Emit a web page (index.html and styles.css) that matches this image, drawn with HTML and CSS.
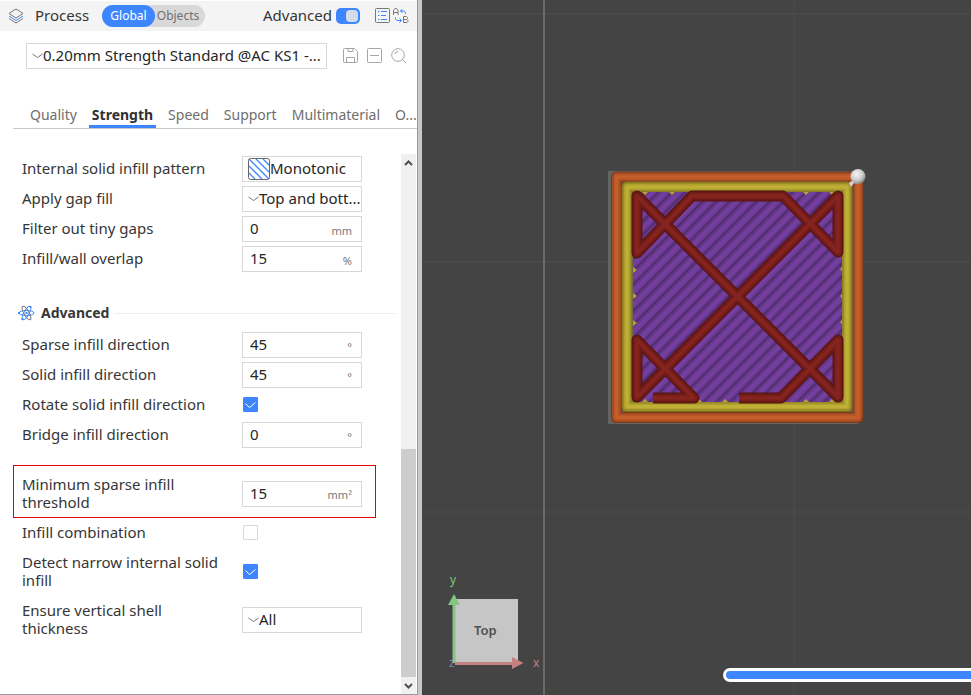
FILE: index.html
```
<!DOCTYPE html>
<html lang="en">
<head>
    <meta charset="UTF-8">
    <meta name="viewport" content="width=device-width, initial-scale=1.0">
    <title>Process settings</title>
    <link rel="stylesheet" href="styles.css">
</head>
<body>
    <aside class="sidebar">
        <header class="process-bar">
            <svg width="16" height="16" viewBox="0 0 16 16" fill="none" stroke="#777">
                <path d="M1 5.500 8 1l7 4.500L8 10z"/>
                <path d="M1 8l7 4.500L15 8" stroke="#3d86ff"/>
                <path d="M1 10.500 8 15l7-4.500"/>
            </svg>
            <h1>Process</h1>
            <div class="scope">
                <button class="active" type="button">Global</button>
                <button type="button">Objects</button>
            </div>
            <label class="mode" for="mode">Advanced</label>
            <input class="switch" type="checkbox" id="mode" checked>
            <button class="icon-btn list-btn" type="button" aria-label="Setting list">
                <svg width="16" height="16" viewBox="0 0 16 16" fill="none" stroke="#777">
                    <rect x=".5" y=".5" width="14" height="14" rx="1"/>
                    <path d="M3 3.500h1.500M3 7.500h1.500M3 11.500h1.500M6 3.500h6M6 7.500h5M6 11.500h6" stroke="#3d86ff"/>
                </svg>
            </button>
            <button class="icon-btn" type="button" aria-label="Compare presets">
                <svg width="16" height="16" viewBox="0 0 16 16" fill="none" stroke="#777">
                    <path d="M.5 7V2.500L2 .5h1.500L5 2.500V7M.5 4.500H5"/>
                    <path d="M10.500 8.500v6h3l1.500-1v-1l-1-1h-3.500M10.500 8.500h3l1 1v1l-1 1"/>
                    <path d="M9.500 1 7.500 3l2 2M7.500 3H11l1.500 1.500V6M6.500 10.500l2 2-2 2M8.500 12.500H4L2.500 11V9.500" stroke="#3d86ff"/>
                </svg>
            </button>
        </header>

        <div class="preset-bar">
            <div class="dropdown">
                <svg width="11" height="6" viewBox="0 0 11 6" fill="none" stroke="#777"><path d="M.5 1l5 3.500 5-3.500"/></svg>
                <select aria-label="Process preset"><option>0.20mm Strength Standard @AC KS1 -...</option></select>
            </div>
            <button class="icon-btn" type="button" aria-label="Save preset">
                <svg width="16" height="16" viewBox="0 0 16 16" fill="none" stroke="#a5a5a5">
                    <path d="M.5 1.500q0-1 1-1h10l3 3v10q0 1-1 1h-12q-1 0-1-1zM5 .5V3.500h5V.5M3.500 14.500v-5h8v5"/>
                </svg>
            </button>
            <button class="icon-btn" type="button" aria-label="Delete preset">
                <svg width="16" height="16" viewBox="0 0 16 16" fill="none" stroke="#a5a5a5">
                    <rect x=".5" y=".5" width="14" height="14" rx="1"/>
                    <path d="M3 7.500h9"/>
                </svg>
            </button>
            <button class="icon-btn" type="button" aria-label="Search">
                <svg width="16" height="16" viewBox="0 0 16 16" fill="none" stroke="#a5a5a5">
                    <circle cx="7" cy="7" r="6.300"/>
                    <path d="M11.500 11.500 15 15M3.500 6q1-2.500 3.500-2.500"/>
                </svg>
            </button>
        </div>

        <nav class="tabs">
            <a href="#quality">Quality</a>
            <a class="active" href="#strength">Strength</a>
            <a href="#speed">Speed</a>
            <a href="#support">Support</a>
            <a href="#multimaterial">Multimaterial</a>
            <a href="#others">O...</a>
        </nav>

        <div class="panel">
            <form class="settings">
                <div class="row">
                    <label for="pattern">Internal solid infill pattern</label>
                    <div class="dropdown">
                        <svg width="22" height="22" viewBox="0 0 22 22" fill="none">
                            <path d="M1 15l6 6M1 8l13 13M1 1l20 20M8 1l13 13M15 1l6 6" stroke="#3d86ff" stroke-width="1.300"/>
                            <rect x=".5" y=".5" width="21" height="21" rx="2" stroke="#666"/>
                        </svg>
                        <select id="pattern"><option>Monotonic</option></select>
                    </div>
                </div>
                <div class="row">
                    <label for="gap-fill">Apply gap fill</label>
                    <div class="dropdown">
                        <svg width="11" height="6" viewBox="0 0 11 6" fill="none" stroke="#777"><path d="M.5 1l5 3.500 5-3.500"/></svg>
                        <select id="gap-fill"><option>Top and bott...</option></select>
                    </div>
                </div>
                <div class="row">
                    <label for="tiny-gaps">Filter out tiny gaps</label>
                    <div class="field"><input type="text" id="tiny-gaps" value="0"><span>mm</span></div>
                </div>
                <div class="row">
                    <label for="overlap">Infill/wall overlap</label>
                    <div class="field"><input type="text" id="overlap" value="15"><span>%</span></div>
                </div>

                <h2>
                    <svg width="17" height="16" viewBox="0 0 17 16" fill="none" stroke="#3d86ff">
                        <ellipse cx="8.500" cy="8" rx="7.500" ry="2.500"/>
                        <ellipse cx="8.500" cy="8" rx="7.500" ry="2.500" transform="rotate(60 8.500 8)" stroke="#777"/>
                        <ellipse cx="8.500" cy="8" rx="7.500" ry="2.500" transform="rotate(120 8.500 8)"/>
                        <path d="M8.500 7v2M1 7v2M12 1.500l1 1M4 13.500l1 1" stroke-width="2"/>
                    </svg>
                    Advanced
                </h2>

                <div class="row">
                    <label for="sparse-dir">Sparse infill direction</label>
                    <div class="field"><input type="text" id="sparse-dir" value="45"><span>°</span></div>
                </div>
                <div class="row">
                    <label for="solid-dir">Solid infill direction</label>
                    <div class="field"><input type="text" id="solid-dir" value="45"><span>°</span></div>
                </div>
                <div class="row">
                    <label for="rotate">Rotate solid infill direction</label>
                    <input class="check" type="checkbox" id="rotate" checked>
                </div>
                <div class="row">
                    <label for="bridge-dir">Bridge infill direction</label>
                    <div class="field"><input type="text" id="bridge-dir" value="0"><span>°</span></div>
                </div>
                <div class="row marked">
                    <label for="threshold">Minimum sparse infill threshold</label>
                    <div class="field"><input type="text" id="threshold" value="15"><span>mm²</span></div>
                </div>
                <div class="row">
                    <label for="combination">Infill combination</label>
                    <input class="check" type="checkbox" id="combination">
                </div>
                <div class="row">
                    <label for="narrow">Detect narrow internal solid infill</label>
                    <input class="check" type="checkbox" id="narrow" checked>
                </div>
                <div class="row">
                    <label for="shell">Ensure vertical shell thickness</label>
                    <div class="dropdown">
                        <svg width="11" height="6" viewBox="0 0 11 6" fill="none" stroke="#777"><path d="M.5 1l5 3.500 5-3.500"/></svg>
                        <select id="shell"><option>All</option></select>
                    </div>
                </div>
            </form>
            <div class="scrollbar">
                <button type="button" aria-label="Scroll up"><svg width="9" height="6" viewBox="0 0 9 6" fill="none" stroke="#505050" stroke-width="2"><path d="M1 5l3.500-3.500L8 5"/></svg></button>
                <div class="track"><div class="thumb"></div></div>
                <button type="button" aria-label="Scroll down"><svg width="9" height="6" viewBox="0 0 9 6" fill="none" stroke="#505050" stroke-width="2"><path d="M1 1l3.500 3.500L8 1"/></svg></button>
            </div>
        </div>
    </aside>

    <main class="preview">
        <svg class="scene" viewBox="0 0 549 695" preserveAspectRatio="xMinYMin slice">
            <defs>
                <!-- one repeat is one extruded line of solid infill -->
                <linearGradient id="infill" gradientUnits="userSpaceOnUse" x1="223" y1="192" x2="229.700" y2="198.700" spreadMethod="repeat">
                    <stop offset="0" stop-color="#4e2c6c"/>
                    <stop offset=".2" stop-color="#66378b"/>
                    <stop offset=".5" stop-color="#7740a1"/>
                    <stop offset=".8" stop-color="#6e3b96"/>
                    <stop offset="1" stop-color="#4e2c6c"/>
                </linearGradient>
                <radialGradient id="ball" cx=".4" cy=".35" r=".65">
                    <stop offset="0" stop-color="#f4f4f4"/>
                    <stop offset=".6" stop-color="#cfcfcf"/>
                    <stop offset="1" stop-color="#8c8c8c"/>
                </radialGradient>
                <rect id="outer-wall" x="194.500" y="177" width="241.500" height="240.500"/>
                <rect id="inner-wall" x="205" y="187" width="220" height="219.500"/>
                <path id="sparse" d="M231 398h41l-57-58v57L416 196v56l-55-56h-91l-55 57v-57L416 397v-57l-57 58h-42"/>
            </defs>

            <!-- bed grid -->
            <path d="M0 13.500h2000M0 262h2000M0 512h2000M372 0v2000" stroke="#4d4e4d"/>
            <path d="M122 0v2000" stroke="#6b6b66" stroke-width="2"/>

            <!-- sliced part -->
            <path d="M186 171h250v247l4 2-4 4H186z" fill="#636563"/>
            <g fill="none" stroke-linejoin="round">
                <use href="#outer-wall" stroke="#7c3818" stroke-width="11"/>
                <use href="#outer-wall" stroke="#a24a22" stroke-width="9"/>
                <use href="#outer-wall" stroke="#b85627" stroke-width="6"/>
                <use href="#outer-wall" stroke="#c45e2a" stroke-width="3"/>
                <use href="#inner-wall" stroke="#7c721e" stroke-width="11"/>
                <use href="#inner-wall" stroke="#988b27" stroke-width="9"/>
                <use href="#inner-wall" stroke="#afa02f" stroke-width="6"/>
                <use href="#inner-wall" stroke="#c0b036" stroke-width="3"/>
            </g>
            <rect x="211" y="192" width="209" height="210" fill="url(#infill)"/>
            <path fill="#b3a431" d="M220 192h6l-3 3zM247 192h6l-3 3zM381 192h6l-3 3zM407 192h6l-3 3zM211 267v6l4-3zM211 293v6l4-3zM211 320v6l4-3zM220 402h6l-3-3zM274 402h6l-3-3zM300 402h6l-3-3zM381 402h6l-3-3zM407 402h6l-3-3zM420 267v4l-2-2zM420 294v4l-2-2zM420 320v4l-2-2z"/>
            <g fill="none" stroke-linejoin="round">
                <use href="#sparse" stroke="#561412" stroke-width="11"/>
                <use href="#sparse" stroke="#6c1a17" stroke-width="9"/>
                <use href="#sparse" stroke="#7b1f1b" stroke-width="6"/>
                <use href="#sparse" stroke="#86241f" stroke-width="3"/>
            </g>
            <path d="M427 183l6-5 2 6-3-1-3 4z" fill="#d2d2d2"/>
            <circle cx="436" cy="176.500" r="7.500" fill="url(#ball)"/>

            <!-- orientation cube -->
            <rect x="33" y="599" width="63" height="64" fill="#c6c6c6"/>
            <text class="face" x="52" y="635">Top</text>
            <text class="axis" x="27" y="667" fill="#7f80bd">z</text>
            <path d="M30.500 663v-58H26l6-11 6 11h-4.500v58z" fill="#84c484"/>
            <path d="M33 662h57v-5l11.500 6L90 669v-4H33z" fill="#c48080"/>
            <text class="axis" x="28" y="584" fill="#84c484">y</text>
            <text class="axis" x="111" y="667" fill="#c48080">x</text>
        </svg>
        <input class="move-slider" type="range" aria-label="Move" value="100">
    </main>
</body>
</html>
```

FILE: styles.css
```
* {
    box-sizing: border-box;
}
body {
    display: flex;
    min-height: 100vh;
    margin: 0;
    font-family: "Noto Sans", sans-serif;
    font-size: 15px;
    line-height: 18px;
    color: #363636;
    background-color: #fff;
}
button, input, select {
    margin: 0;
    padding: 0;
    border: none;
    background: none;
    font: inherit;
    color: inherit;
}
svg {
    display: block;
    flex: none;
}

/* sidebar */
.sidebar {
    display: flex;
    flex-direction: column;
    flex: none;
    width: 422px;
    border-right: 4px solid #c8c8c8;
    box-shadow: inset -1px -1px #999;
}
.process-bar {
    display: flex;
    align-items: center;
    height: 30px;
    margin: 1px 1px 0 0;
    padding: 0 8px;
    background-color: #f4f4f4;
}
h1 {
    flex: none;
    width: 78px;
    margin: 0;
    padding: 0 0 2px 11px;
    font-size: 15px;
    font-weight: normal;
}
.scope {
    display: flex;
    height: 22px;
    border-radius: 11px;
    background-color: #d9d9d9;
    font-size: 12px;
    color: #707070;
}
.scope button {
    width: 50px;
    padding-right: 4px;
}
.scope .active {
    width: 53px;
    padding: 0;
    border-radius: 11px;
    background-color: #3d86ff;
    color: #fff;
}
.mode {
    margin-left: auto;
    padding-bottom: 2px;
}
.switch {
    appearance: none;
    width: 24px;
    height: 16px;
    margin: 0 15px 0 4px;
    padding: 2px;
    border-radius: 5px;
    background-color: #3d86ff;
}
.switch::before {
    content: "";
    display: block;
    width: 12px;
    height: 12px;
    margin-left: auto;
    border-radius: 4px;
    background-color: #d4dcea;
}
.list-btn {
    margin-right: 2px;
}
.preset-bar {
    display: flex;
    align-items: center;
    gap: 8px;
    padding: 12px 11px 0 26px;
}
.preset-bar .dropdown {
    flex: 1;
    margin-right: 8px;
}

/* tabs */
.tabs {
    display: flex;
    gap: 9px;
    height: 27px;
    margin: 33px 1px 0 13px;
    padding-left: 14px;
    border-bottom: 1px solid #c8c8c8;
    font-size: 14px;
}
.tabs a {
    height: 26px;
    padding: 4px 3px;
    color: #6e6e6e;
    text-decoration: none;
}
.tabs .active {
    border-bottom: 3px solid #3d86ff;
    color: #303030;
    font-weight: bold;
}

/* settings */
.panel {
    display: flex;
    flex: 1;
    margin: 25px 2px 1px 0;
}
.settings {
    flex: 1;
}
.row {
    display: flex;
    align-items: center;
    gap: 16px;
    min-height: 30px;
    padding: 0 13px 0 22px;
}
.row label {
    width: 204px;
    padding: 5px 0 7px;
}
.row .dropdown, .row .field {
    width: 120px;
}
.marked {
    margin: 15px 25px 0 13px;
    padding: 4px 0 0 8px;
    border: 1px solid #e60000;
}
.marked label {
    padding-bottom: 6px;
}
h2 {
    display: flex;
    align-items: center;
    gap: 6px;
    margin: 30px 6px 8px 18px;
    font-size: 14px;
    line-height: 18px;
}
h2::after {
    content: "";
    flex: 1;
    height: 1px;
    background-color: #ececec;
}
.dropdown, .field {
    display: flex;
    align-items: center;
    height: 26px;
    border: 1px solid #d8d8d8;
    background-color: #fff;
}
.dropdown {
    padding-left: 5px;
}
.dropdown select, .field input {
    flex: 1;
    min-width: 0;
    height: 24px;
    padding-bottom: 2px;
    color: #262626;
}
.dropdown select {
    appearance: none;
    line-height: 22px;
}
.field {
    padding: 0 9px 0 7px;
}
.field span {
    padding-top: 3px;
    font-size: 11px;
    color: #777;
}
.check {
    appearance: none;
    width: 15px;
    height: 15px;
    margin: 0 0 1px 1px;
    border: 1px solid #d8d8d8;
    border-radius: 1px;
}
.check:checked {
    border-color: #3d86ff;
    background: #3d86ff url("data:image/svg+xml,%3Csvg xmlns='http://www.w3.org/2000/svg' viewBox='0 0 13 13'%3E%3Cpath d='M1.5 5.500l4 4 6-5' fill='none' stroke='white'/%3E%3C/svg%3E") center;
}

.scrollbar {
    display: flex;
    flex-direction: column;
    width: 15px;
    background-color: #f0f0f0;
}
.scrollbar button {
    display: grid;
    place-items: center;
    height: 17px;
}
.track {
    display: flex;
    flex-direction: column;
    flex: 1;
}
.thumb {
    height: 45%;
    margin-top: auto;
    background-color: #cdcdcd;
}

/* preview */
.preview {
    position: relative;
    flex: 1;
    overflow: hidden;
    background-color: #434443;
}
.scene {
    position: absolute;
    width: 100%;
    height: 100%;
}
.axis {
    font-size: 12px;
}
.face {
    font-size: 13px;
    font-weight: 600;
    fill: #505050;
}
.move-slider {
    appearance: none;
    position: absolute;
    right: -20px;
    bottom: 13px;
    width: 268px;
    height: 14px;
    border: 3px solid #fff;
    border-radius: 7px;
    background-color: #3d86ff;
}
.move-slider::-webkit-slider-thumb {
    appearance: none;
    width: 0;
}
```
